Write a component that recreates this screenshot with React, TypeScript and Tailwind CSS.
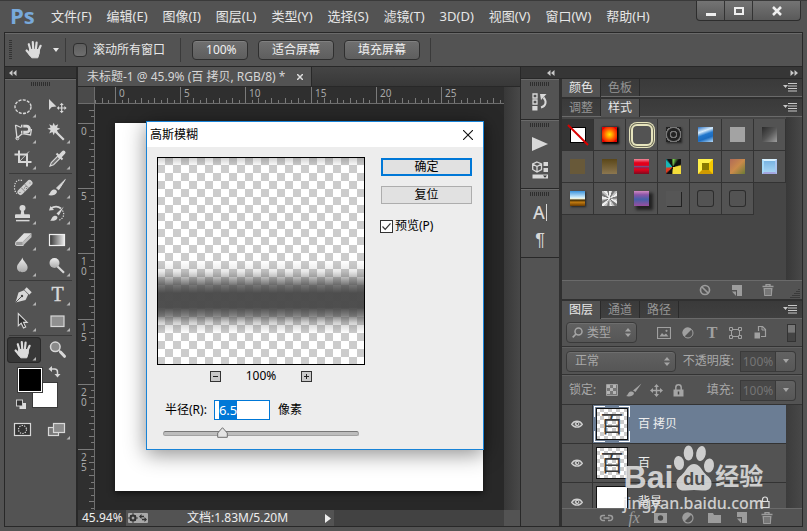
import { useEffect, useRef, useState } from 'react'
import type { ReactNode } from 'react'
import { clsx } from 'clsx'

const MENUS = ['文件(F)', '编辑(E)', '图像(I)', '图层(L)', '类型(Y)', '选择(S)', '滤镜(T)', '3D(D)', '视图(V)', '窗口(W)', '帮助(H)']

const UNIT = 13.04
const HALF_UNITS = Array.from({ length: 160 }, (_, i) => i - 4)
const LABELS = [0, 5, 10, 15, 20, 25]

function Grip() {
  return (
    <div className="mx-auto h-1 w-5 bg-[repeating-linear-gradient(90deg,#2e2e2e_0_1px,#535353_1px_2px)]" />
  )
}

function DoubleArrow({ flip }: { flip?: boolean }) {
  return (
    <svg width="8" height="6" viewBox="0 0 8 6" className={clsx(flip && 'rotate-180')} fill="#c8c8c8">
      <path d="M3.5 0v6L0 3zM7.5 0v6L4 3z" />
    </svg>
  )
}

function HandShape() {
  return (
    <>
      <path d="M11.5 12.5h9.800v3.500l-1.500 4.800h-6L10.800 17z" fill="#dcdcdc" stroke="#dcdcdc" strokeLinejoin="round" />
      <g stroke="#dcdcdc" strokeWidth="2.2" strokeLinecap="round" fill="none">
        <path d="M12.800 14 10.800 7.200" />
        <path d="M15.300 13 14.800 5.200" />
        <path d="M17.800 13 18.600 5.600" />
        <path d="M20.300 14 22.600 8.800" />
        <path d="M12.500 18 8.600 13.500" />
      </g>
    </>
  )
}

interface Tool {
  name: string
  art: ReactNode
  more?: boolean
  active?: boolean
}

const LIGHT = '#d8d8d8'

const SELECT_TOOLS: Tool[] = [
  {
    name: '椭圆选框',
    more: true,
    art: <ellipse cx="16" cy="12.7" rx="8" ry="6.8" fill="none" stroke={LIGHT} strokeWidth="1.4" strokeDasharray="3 1.3" />,
  },
  {
    name: '移动',
    art: (
      <>
        <path d="M8 5v11l2.800-3 4.700-.6z" fill={LIGHT} />
        <path d="M20.700 10.500v7M17 14h7.500" stroke={LIGHT} strokeWidth="1.2" />
        <path d="m20.700 8.800 2 2.200h-4zM20.700 19.200l-2-2.200h4zM15.800 14l2.200-2v4zM25.600 14l-2.200-2v4z" fill={LIGHT} />
      </>
    ),
  },
  {
    name: '磁性套索',
    more: true,
    art: (
      <>
        <path d="M8.500 5 14 7.500M8.500 5l1.500 13 5.500-4.500 8 1.500 1-6" fill="none" stroke={LIGHT} strokeWidth="1.300" />
        <circle cx="10.400" cy="18.300" r="1.500" fill="none" stroke={LIGHT} />
        <path d="M14 6.200h5.500a3 3 0 0 1 0 6H14" fill="none" stroke={LIGHT} strokeWidth="2.800" />
        <path d="M15.800 4.500v3.500M15.800 10.500V14" stroke="#535353" strokeWidth=".8" />
      </>
    ),
  },
  {
    name: '魔棒',
    more: true,
    art: (
      <>
        <path d="m12.700 2.800 1.300 3 3.200-1.600-1.200 3.300 3.200 1.300-3.200 1.400 1.200 3.200-3.200-1.400-1.300 3.200-1.300-3.200-3.200 1.400L9.600 10 6.400 8.800 9.600 7.500 8.200 4.200l3.200 1.600z" fill={LIGHT} />
        <path d="m14.500 11.500 8.300 8.300" stroke={LIGHT} strokeWidth="2.200" />
      </>
    ),
  },
  {
    name: '裁剪',
    more: true,
    art: (
      <>
        <path d="M12 4.500V16h12.500M7.500 8.500H20V20.500" fill="none" stroke={LIGHT} strokeWidth="2" />
        <path d="m12.500 15.500 9.500-10" stroke={LIGHT} strokeWidth=".9" />
      </>
    ),
  },
  {
    name: '吸管',
    more: true,
    art: (
      <>
        <path d="m9 20 1.300-3.500 7-7 2.300 2.200-7 7z" fill="#707070" stroke={LIGHT} strokeWidth="1.100" />
        <path d="m15.500 7.500 6 6" stroke={LIGHT} strokeWidth="2" />
        <path d="m18.800 10.500 3.700-4" stroke={LIGHT} strokeWidth="4" strokeLinecap="round" />
      </>
    ),
  },
]

const PAINT_TOOLS: Tool[] = [
  {
    name: '修复画笔',
    more: true,
    art: (
      <>
        <path d="M15 5.500c-4-1.500-7.500 1-7.500 7 0 3 1 5 2.500 6" fill="none" stroke={LIGHT} strokeWidth="1.200" strokeDasharray="1.300 1.300" />
        <path d="m13.500 17 9-9" stroke="#cfcfcf" strokeWidth="6" strokeLinecap="round" />
        <path d="m14 12.500 4.500 4.500M17.500 9l4.500 4.500" stroke="#777" strokeWidth=".8" />
        <path d="M17.200 13h.9M19.200 13.500h.9M18.500 11.500h.9M12.500 17.500h.9M22.500 8h.9" stroke="#555" strokeWidth=".9" />
      </>
    ),
  },
  {
    name: '画笔',
    more: true,
    art: (
      <>
        <path d="m15.500 13 8.800-8.500-6.600 10.300z" fill={LIGHT} stroke={LIGHT} strokeLinejoin="round" />
        <path d="M7 20c2.200-.5 2-4.500 5.500-5.500 2.200-.5 4 1.200 3.300 3C14.800 20.200 10.500 21 7 20z" fill={LIGHT} />
      </>
    ),
  },
  {
    name: '仿制图章',
    more: true,
    art: (
      <>
        <circle cx="15.500" cy="7" r="3" fill={LIGHT} />
        <path d="M14.300 9h2.400l.6 4.200h4.700a1 1 0 0 1 1 1V17H8v-2.800a1 1 0 0 1 1-1h4.700z" fill={LIGHT} />
        <path d="M9 19.600h13.500" stroke={LIGHT} strokeWidth="1.500" />
      </>
    ),
  },
  {
    name: '历史记录画笔',
    more: true,
    art: (
      <>
        <path d="M9.500 7.500c4-2.500 8-2 10.500 0" fill="none" stroke={LIGHT} strokeWidth="1.800" />
        <path d="M8 9.500 13 9 9.500 5z" fill={LIGHT} />
        <path d="m15.500 12.500 7.300-7-5 9z" fill={LIGHT} />
        <path d="M9 19.500c1.800-.5 1.500-4 4.500-4.800 2-.4 3.500 1 2.800 2.500-1 2.300-4.300 3-7.300 2.300z" fill={LIGHT} />
        <path d="M21.500 9.500c2.500 4 1 8-4 10" fill="none" stroke={LIGHT} strokeWidth="1.200" strokeDasharray="1.300 1.300" />
      </>
    ),
  },
  {
    name: '橡皮擦',
    more: true,
    art: (
      <>
        <path d="m9 14.500 8-8.300h7.500l-8.300 8.300z" fill="#dedede" />
        <path d="M9 14.500h7.200v4H9.500q-1 0-1-1.500z" fill="#9a9a9a" stroke={LIGHT} strokeWidth=".9" />
        <path d="m16.200 14.500 8.300-8.300v4l-8.300 8.300z" fill="#bdbdbd" />
      </>
    ),
  },
  {
    name: '渐变',
    more: true,
    art: <rect x="8.500" y="7.500" width="15" height="11" fill="url(#toolFade)" stroke="#efefef" strokeWidth="1.200" />,
  },
  {
    name: '模糊',
    more: true,
    art: <path d="M15.300 4.500c1 4 5.300 6 5.300 10 0 3-2.300 4.700-5.300 4.700S10 17.500 10 14.500c0-4 4.300-6 5.300-10z" fill="url(#toolSilver)" />,
  },
  {
    name: '减淡',
    more: true,
    art: (
      <>
        <circle cx="13.500" cy="10" r="5" fill="url(#toolSilver)" />
        <path d="m16.500 13.500 6.500 6.300" stroke={LIGHT} strokeWidth="2.200" />
      </>
    ),
  },
]

const SHAPE_TOOLS: Tool[] = [
  {
    name: '钢笔',
    more: true,
    art: (
      <>
        <path d="m8.500 20.500 3-10 5.500-2.300 4.200 4.200-2.600 5.600z" fill={LIGHT} />
        <path d="m8.500 20.500 6.300-6.300" stroke="#444" strokeWidth=".9" />
        <circle cx="15" cy="14" r="1.200" fill="#444" />
        <path d="m18.500 6.500 5 5" stroke={LIGHT} strokeWidth="3.300" />
      </>
    ),
  },
  {
    name: '文字',
    more: true,
    art: (
      <text x="16.500" y="19" textAnchor="middle" fontFamily="Liberation Serif, serif" fontSize="20" stroke={LIGHT} strokeWidth=".4" fill={LIGHT}>
        T
      </text>
    ),
  },
  {
    name: '路径选择',
    more: true,
    art: <path d="M11.300 5.500v12.300l2.900-2.600 2.300 4.900 2.200-1-2.200-4.700h3.700z" fill="#2f2f2f" stroke={LIGHT} strokeWidth="1.100" />,
  },
  {
    name: '矩形',
    more: true,
    art: <rect x="10" y="8" width="13" height="10.500" fill="#909090" stroke={LIGHT} strokeWidth="1.200" />,
  },
]

const VIEW_TOOLS: Tool[] = [
  { name: '抓手', more: true, active: true, art: <HandShape /> },
  {
    name: '缩放',
    art: (
      <>
        <circle cx="14.300" cy="9.800" r="4.800" fill="#8a8a8a" stroke={LIGHT} strokeWidth="1.500" />
        <path d="m18 13.500 2 2" stroke={LIGHT} strokeWidth="1.500" />
        <path d="m19.500 15 4 4.300" stroke={LIGHT} strokeWidth="3" strokeLinecap="round" />
      </>
    ),
  },
]

const MODE_TOOLS: Tool[] = [
  {
    name: '快速蒙版',
    art: (
      <>
        <rect x="7.500" y="7.500" width="16" height="12" fill="#333" stroke={LIGHT} strokeWidth="1.200" />
        <circle cx="15.500" cy="13.500" r="4" fill="none" stroke={LIGHT} strokeWidth="1.200" strokeDasharray="1.300 1.200" />
      </>
    ),
  },
  {
    name: '屏幕模式',
    more: true,
    art: (
      <>
        <rect x="7.500" y="11.500" width="10" height="8" fill="#777" stroke={LIGHT} strokeWidth="1.200" />
        <rect x="12.500" y="7.500" width="11" height="9" fill="#8c8c8c" stroke={LIGHT} strokeWidth="1.200" />
      </>
    ),
  },
]

function ToolGroup({ tools }: { tools: Tool[] }) {
  return (
    <div className="grid grid-cols-2">
      {tools.map((tool) => (
        <button
          key={tool.name}
          aria-label={tool.name}
          className={clsx(
            'h-[26px]',
            tool.active && 'rounded bg-[#383838] shadow-[inset_0_0_0_1px_#2a2a2a]'
          )}
        >
          <svg viewBox="0 0 33 26" className="h-[26px] w-[33px]">
            {tool.art}
            {tool.more && <path d="M29 20v3.500h-3.500z" fill="#b5b5b5" />}
          </svg>
        </button>
      ))}
    </div>
  )
}

function ToolDivider() {
  return <div className="mx-0.5 my-px h-px bg-[#3a3a3a]" />
}

function ToolPanel() {
  return (
    <aside className="flex w-[73px] shrink-0 flex-col border-x border-[#282828] bg-[#535353]">
      <div className="flex h-3 items-center border-b border-[#282828] bg-[#363636] pl-1">
        <DoubleArrow />
      </div>
      <svg width="0" height="0" className="absolute">
        <defs>
          <linearGradient id="toolFade">
            <stop offset="0" stopColor="#333" />
            <stop offset="1" stopColor="#eee" />
          </linearGradient>
          <linearGradient id="toolSilver" x2="0" y2="1">
            <stop offset="0" stopColor="#eee" />
            <stop offset="1" stopColor="#aaa" />
          </linearGradient>
        </defs>
      </svg>
      <div className="border-t border-[#6a6a6a] px-0.5 pt-0.5">
        <Grip />
        <div className="pt-2">
          <ToolGroup tools={SELECT_TOOLS} />
          <ToolDivider />
          <ToolGroup tools={PAINT_TOOLS} />
          <ToolDivider />
          <ToolGroup tools={SHAPE_TOOLS} />
          <ToolDivider />
          <ToolGroup tools={VIEW_TOOLS} />
        </div>
        <svg viewBox="0 0 66 53" className="h-[53px] w-[66px]">
          <rect x="25.500" y="19.500" width="25" height="25" fill="#fff" stroke="#3a3a3a" />
          <rect x="10.500" y="4.500" width="25" height="25" fill="#fff" stroke="#3a3a3a" />
          <rect x="12" y="6" width="22" height="22" fill="#000" />
          <path d="M44.500 6h3q3 0 3 3v3" fill="none" stroke={LIGHT} strokeWidth="1.500" />
          <path d="m41.500 6 3.500-3v6zM50.500 14.500 47.500 11h6z" fill={LIGHT} />
          <rect x="12.500" y="40" width="6.500" height="6" fill="#ddd" />
          <rect x="9.500" y="37" width="6" height="6" fill="#333" stroke="#ccc" />
        </svg>
        <ToolGroup tools={MODE_TOOLS} />
      </div>
    </aside>
  )
}

function MenuBar() {
  return (
    <header className="flex h-8 shrink-0 items-center border-t border-[#3a3a3a] pr-1.5 pl-2.5 text-[13px]">
      <span className="w-[41px] self-start font-['Open_Sans',sans-serif] text-[22px] leading-7 font-bold text-[#78a9db]">Ps</span>
      <nav className="flex gap-[15px]">
        {MENUS.map((menu) => (
          <button key={menu} className="text-[#e6e6e6]">
            {menu}
          </button>
        ))}
      </nav>
      <div className="ml-auto flex h-5 self-start divide-x divide-[#333] overflow-hidden rounded-b border border-t-0 border-[#2d2d2d] bg-linear-to-b from-[#747474] to-[#5a5a5a]">
        <button aria-label="最小化" className="grid w-7 place-items-center">
          <svg width="12" height="12"><path d="M1 8h10v3H1z" fill="#eee" /></svg>
        </button>
        <button aria-label="最大化" className="grid w-7 place-items-center">
          <svg width="12" height="12"><path d="M2 3h8v6H2z" fill="none" stroke="#eee" strokeWidth="2" /></svg>
        </button>
        <button aria-label="关闭" className="grid w-[47px] place-items-center">
          <svg width="12" height="12"><path d="m2 2 8 8M10 2l-8 8" stroke="#eee" strokeWidth="2.500" /></svg>
        </button>
      </div>
    </header>
  )
}

const optionButton =
  'h-5 rounded-sm border border-[#2f2f2f] bg-linear-to-b from-[#707070] to-[#5e5e5e] px-[13px] text-[#f0f0f0] shadow-[inset_0_1px_0_#808080]'

function OptionsBar() {
  return (
    <div className="mx-1 flex h-[34px] shrink-0 items-center border border-b-0 border-[#282828] pl-1 shadow-[inset_0_1px_0_#6a6a6a]">
      <div className="h-5 w-[3px] bg-[repeating-linear-gradient(180deg,#333_0_1px,#535353_1px_2px)]" />
      <svg viewBox="0 0 33 26" className="ml-1.5 h-[26px] w-[33px]">
        <HandShape />
      </svg>
      <svg width="6" height="4" className="ml-0.5"><path d="M0 0h6L3 4z" fill="#e6e6e6" /></svg>
      <div className="ml-1.5 h-6 w-px bg-[#3a3a3a]" />
      <label className="ml-[7px] flex items-center gap-1.5 text-[#e8e8e8]">
        <input
          type="checkbox"
          className="size-3.5 appearance-none rounded-sm border border-[#2f2f2f] bg-linear-to-b from-[#5e5e5e] to-[#6e6e6e]"
        />
        滚动所有窗口
      </label>
      <div className="mr-[11px] ml-[15px] h-6 w-px bg-[#3a3a3a]" />
      <div className="flex gap-2.5">
        <button className={clsx(optionButton, 'w-14')}>100%</button>
        <button className={optionButton}>适合屏幕</button>
        <button className={optionButton}>填充屏幕</button>
      </div>
      <div className="ml-2.5 h-6 w-px bg-[#3a3a3a]" />
    </div>
  )
}

function HorizontalRuler() {
  return (
    <svg className="h-full w-full" fontFamily="Noto Sans, sans-serif" fontSize="10" fill="#a8a8a8">
      {HALF_UNITS.map((i) => {
        const x = Math.round(20 + (i * UNIT) / 2) + 0.5
        return <path key={i} d={`M${x} ${i % 10 === 0 ? 0 : i % 2 === 0 ? 11 : 13}V16`} stroke="#7a7a7a" />
      })}
      {LABELS.map((n) => (
        <text key={n} x={Math.round(24 + n * UNIT)} y="10">{n}</text>
      ))}
    </svg>
  )
}

function VerticalRuler() {
  return (
    <svg className="h-full w-full" fontFamily="Noto Sans, sans-serif" fontSize="10" fill="#a8a8a8">
      {HALF_UNITS.map((i) => {
        const y = Math.round(19 + (i * UNIT) / 2) + 0.5
        return <path key={i} d={`M${i % 10 === 0 ? 0 : i % 2 === 0 ? 11 : 13} ${y}H16`} stroke="#7a7a7a" />
      })}
      {LABELS.map((n) =>
        String(n).split('').map((digit, k) => (
          <text key={`${n}-${k}`} x="3" y={Math.round(31 + n * UNIT) + k * 10}>{digit}</text>
        ))
      )}
    </svg>
  )
}

function BlurPreview() {
  return (
    <svg viewBox="0 0 206 206" className="block size-[206px]">
      <defs>
        <pattern id="checker" x="-1" y="-1" width="16" height="16" patternUnits="userSpaceOnUse">
          <rect width="16" height="16" fill="#fff" />
          <path d="M8 0h8v8H8zM0 8h8v8H0z" fill="#ccc" />
        </pattern>
        <linearGradient id="blurBand" x2="0" y2="1">
          <stop offset="0" stopColor="#4b4b4b" stopOpacity="0.250" />
          <stop offset="0.040" stopColor="#4b4b4b" stopOpacity="0" />
          <stop offset="0.500" stopColor="#4b4b4b" stopOpacity="0" />
          <stop offset="0.550" stopColor="#4b4b4b" stopOpacity="0.120" />
          <stop offset="0.580" stopColor="#4b4b4b" stopOpacity="0.380" />
          <stop offset="0.615" stopColor="#4b4b4b" stopOpacity="0.750" />
          <stop offset="0.655" stopColor="#4b4b4b" stopOpacity="0.980" />
          <stop offset="0.725" stopColor="#4b4b4b" stopOpacity="0.980" />
          <stop offset="0.765" stopColor="#4b4b4b" stopOpacity="0.700" />
          <stop offset="0.800" stopColor="#4b4b4b" stopOpacity="0.250" />
          <stop offset="0.850" stopColor="#4b4b4b" stopOpacity="0" />
        </linearGradient>
      </defs>
      <rect width="206" height="206" fill="url(#checker)" />
      <rect width="206" height="206" fill="url(#blurBand)" />
    </svg>
  )
}

function ZoomButton({ label, d }: { label: string; d: string }) {
  return (
    <button aria-label={label} className="grid size-[11px] place-items-center border border-[#333] bg-[#c9c9c9]">
      <svg width="7" height="7"><path d={d} stroke="#222" /></svg>
    </button>
  )
}

function BlurDialog() {
  const radiusRef = useRef<HTMLInputElement>(null)
  const [radius, setRadius] = useState('6.5')
  const [slider, setSlider] = useState(29)
  const [preview, setPreview] = useState(true)

  useEffect(() => {
    radiusRef.current?.focus()
    radiusRef.current?.select()
  }, [])

  return (
    <section
      role="dialog"
      aria-label="高斯模糊"
      className="absolute top-[17px] left-[51px] border border-[#1883d7] bg-[#ededed] text-black shadow-[0_4px_20px_rgba(0,0,0,0.450)]"
    >
      <div className="flex h-[25px] items-center justify-between bg-white pr-2.5 pl-[3px]">
        <h1>高斯模糊</h1>
        <button aria-label="关闭">
          <svg width="10" height="10"><path d="m0 0 10 10M10 0 0 10" stroke="#111" strokeWidth="1.100" /></svg>
        </button>
      </div>
      <div className="flex gap-4 pt-2.5 pr-[11px] pb-2.5 pl-2.5">
        <div>
          <div className="border border-black">
            <BlurPreview />
          </div>
          <div className="mt-[3px] flex h-4 items-center justify-center gap-[25px]">
            <ZoomButton label="缩小" d="M1 3.500h5" />
            <span>100%</span>
            <ZoomButton label="放大" d="M1 3.500h5M3.500 1v5" />
          </div>
          <div className="mt-4 flex h-5 items-center pl-2">
            <label htmlFor="radius">半径(R):</label>
            <input
              id="radius"
              ref={radiusRef}
              value={radius}
              onChange={(e) => setRadius(e.target.value)}
              className="mr-2 ml-[7px] h-5 w-14 border border-[#0078d7] bg-white pl-1 text-[13px] outline-none selection:bg-[#0078d7] selection:text-white"
            />
            像素
          </div>
          <div className="relative mt-[7px] ml-1.5 h-3 w-[196px]">
            <input
              type="range"
              aria-label="半径"
              value={slider}
              onChange={(e) => setSlider(Number(e.target.value))}
              className="block h-3 w-full appearance-none bg-transparent [&::-webkit-slider-runnable-track]:h-[5px] [&::-webkit-slider-runnable-track]:rounded-full [&::-webkit-slider-runnable-track]:border [&::-webkit-slider-runnable-track]:border-[#a2a2a2] [&::-webkit-slider-runnable-track]:border-t-[#777] [&::-webkit-slider-runnable-track]:bg-[#bdbdbd] [&::-webkit-slider-thumb]:size-[11px] [&::-webkit-slider-thumb]:appearance-none [&::-webkit-slider-thumb]:opacity-0"
            />
            <svg
              width="11"
              height="11"
              className="pointer-events-none absolute top-0"
              style={{ left: Math.round((slider / 100) * 185) }}
            >
              <path d="M5.500.7 10.300 6v4.300H.7V6z" fill="#e4e4e4" stroke="#6e6e6e" />
            </svg>
          </div>
        </div>
        <div className="flex w-[91px] flex-col">
          <button className="mt-px h-[18px] border-2 border-[#0078d7] bg-[#e1e1e1] leading-[14px]">确定</button>
          <button className="mt-2.5 h-[18px] border border-[#adadad] bg-[#e1e1e1] leading-4">复位</button>
          <label className="mt-3.5 -ml-px flex items-center gap-0.5">
            <span className="grid size-[13px]">
              <input
                type="checkbox"
                checked={preview}
                onChange={(e) => setPreview(e.target.checked)}
                className="col-start-1 row-start-1 size-[13px] appearance-none border border-[#333] bg-white"
              />
              {preview && (
                <svg viewBox="0 0 13 13" className="pointer-events-none col-start-1 row-start-1 size-[13px]">
                  <path d="m2.500 6.500 2.700 2.800 5.300-6" fill="none" stroke="#333" strokeWidth="1.200" />
                </svg>
              )}
            </span>
            预览(P)
          </label>
        </div>
      </div>
    </section>
  )
}

function DocumentArea() {
  return (
    <main className="flex min-w-0 flex-1 flex-col border-l border-[#282828] bg-[#535353]">
      <div className="flex h-5 shrink-0 border-b border-[#282828] bg-linear-to-b from-[#454545] to-[#383838]">
        <div className="flex items-center gap-3 border-r border-[#282828] bg-[#535353] pr-2 pl-[9px] whitespace-nowrap text-[#d6d6d6]">
          未标题-1 @ 45.9% (百 拷贝, RGB/8) *
          <button aria-label="关闭文档">
            <svg width="6" height="6"><path d="m0 0 6 6M6 0 0 6" stroke="#ddd" strokeWidth="1.500" /></svg>
          </button>
        </div>
      </div>
      <div className="flex min-h-0 flex-1">
        <div className="grid min-w-0 flex-1 grid-cols-[17px_1fr] grid-rows-[17px_1fr] overflow-hidden">
          <div className="border-r border-b border-[#6d6d6d] bg-[#4a4a4a]" />
          <div className="overflow-hidden border-b border-[#6d6d6d] bg-[#2f2f2f]">
            <HorizontalRuler />
          </div>
          <div className="overflow-hidden border-r border-[#6d6d6d] bg-[#2f2f2f]">
            <VerticalRuler />
          </div>
          <div className="relative overflow-hidden bg-[#282828] pt-[19px] pl-5">
            <div className="size-[368px] bg-white shadow-[0_2px_6px_#111]" />
            <BlurDialog />
          </div>
        </div>
        <div className="w-4 bg-linear-to-r from-[#383838] to-[#484848]" />
      </div>
      <footer className="flex h-4 shrink-0 bg-[#424242] text-[#eee]">
        <span className="w-12 bg-[#3a3a3a] pl-1 leading-4">45.94%</span>
        <div className="flex w-[208px] items-center bg-[#535353]">
          <svg width="20" height="10" className="ml-0.5">
            <rect width="20" height="10" rx="1" fill="#a9a9a9" />
            <circle cx="5" cy="5" r="2.500" fill="none" stroke="#333" strokeWidth="2" />
            <path d="M5 0v10M0 5h10M2 2l6 6M8 2 2 8" stroke="#333" strokeWidth=".9" />
            <circle cx="5" cy="5" r="1.200" fill="#a9a9a9" />
            <path d="M12 3.500h4M14 6.500h4" stroke="#333" strokeWidth="1.300" />
            <path d="M13.500 1v5L11 3.500zM16.500 4v5L19 6.500z" fill="#333" />
          </svg>
          <span className="ml-[39px] leading-4">文档:1.83M/5.20M</span>
          <svg width="6" height="9" className="mr-[3px] ml-auto"><path d="M0 0v9l6-4.500z" fill="#eee" /></svg>
        </div>
        <div className="ml-auto w-4 bg-[#535353]" />
      </footer>
    </main>
  )
}

function IconStrip() {
  return (
    <aside className="flex w-[38px] shrink-0 flex-col bg-[#535353]">
      <div className="flex h-[41px] flex-col border-t border-b border-t-[#6a6a6a] border-b-[#282828] pt-0.5">
        <Grip />
        <button aria-label="历史记录" className="mx-auto mt-1.5">
          <svg width="16" height="19" viewBox="0 0 16 19">
            <path d="M1 2h4v4H1zM1 8h4v4H1z" fill="none" stroke={LIGHT} strokeWidth="1.300" />
            <path d="M.3 14h5.200v4.500H.3z" fill={LIGHT} />
            <path d="M9 15.500c5-1.500 6-6 2.500-10" fill="none" stroke={LIGHT} strokeWidth="2" />
            <path d="M8 2h6.500L9 8z" fill={LIGHT} />
          </svg>
        </button>
      </div>
      <div className="flex h-[69px] flex-col items-center border-t border-b border-t-[#6a6a6a] border-b-[#282828] pt-0.5">
        <Grip />
        <button aria-label="动作" className="mt-2.5">
          <svg width="16" height="14"><path d="M0 0v14l16-7z" fill={LIGHT} /></svg>
        </button>
        <button aria-label="3D" className="mt-2.5">
          <svg width="16" height="18" viewBox="0 0 16 18">
            <path d="m5 1 4.500 2v5.500L5 11 .7 8.500V3zM.7 3 5 5.500 9.500 3M5 5.500V11" fill="none" stroke={LIGHT} strokeWidth="1.300" />
            <path d="M11.500 1H16v4h-4.500zM11.500 7H16v4h-4.500zM.5 13.500H16V17.500H.5z" fill={LIGHT} />
            <path d="M11 14.500h4l-2 2.200z" fill="#333" />
          </svg>
        </button>
      </div>
      <div className="flex h-[69px] flex-col items-center border-t border-b border-t-[#6a6a6a] border-b-[#282828] pt-0.5 text-[#d8d8d8]">
        <Grip />
        <button aria-label="字符" className="mt-1.5 flex items-center gap-px font-['Noto_Sans',sans-serif] text-lg leading-5 font-medium">
          A
          <span className="h-[17px] w-px bg-[#d8d8d8]" />
        </button>
        <button aria-label="段落" className="mt-2 font-['Liberation_Sans',sans-serif] text-lg leading-5 font-medium">
          ¶
        </button>
      </div>
    </aside>
  )
}

function PanelTabs({ tabs, active }: { tabs: string[]; active: string }) {
  return (
    <div className="flex h-[18px] shrink-0 items-stretch border-b border-[#6a6a6a] bg-linear-to-b from-[#3a3a3a] to-[#404040]">
      {tabs.map((tab) => (
        <button
          key={tab}
          className={clsx(
            'border-r border-[#2a2a2a] px-[7px]',
            tab === active ? '-mb-px bg-[#535353] text-[#e8e8e8]' : 'text-[#959595]'
          )}
        >
          {tab}
        </button>
      ))}
      <button aria-label="面板菜单" className="mr-[5px] ml-auto">
        <svg width="14" height="9"><path d="M0 2h5L2.500 5z" fill="#c8c8c8" /><path d="M5 .5h9M5 3h9M5 5.500h9M5 8h9" stroke="#c8c8c8" /></svg>
      </button>
    </div>
  )
}

const STYLES = [
  '',
  'bg-radial from-[#ffe600] via-[#ff5a00] to-[#e60000] to-80% shadow-[1px_1px_2px_1px_#000]',
  'rounded-sm border-0 bg-[#535353] shadow-[0_0_0_2px_#e6e4bd,0_0_0_3px_#6c6b58,0_0_0_4px_#e6e4bd]',
  'bg-[repeating-radial-gradient(circle,#222_0_2px,#777_3px_4px)] shadow-[1px_1px_2px_#222]',
  'bg-[linear-gradient(160deg,#2a6fc0,#d8ecfb_30%,#2277cc_50%,#1b6cc0_70%,#b7dcfa)]',
  'bg-[#a3a3a3]',
  'bg-linear-to-br from-[#2b2b2b] via-[#555] to-[#a0a0a0]',
  'bg-[#685939]',
  'bg-linear-to-b from-[#5b4718] to-[#8c7750]',
  'bg-[linear-gradient(#f28a9b,#e3001b_25%,#e3001b_42%,#7c4a80_50%,#a31a44_58%,#e3001b_70%,#7d0a20)]',
  'bg-[conic-gradient(from_40deg_at_45%_55%,#111_0_8%,#f3dc3a_12%_38%,#111_42%_50%,#e03a20_54%_60%,#17b7b7_66%_76%,#111_80%_86%,#7ad04f_90%,#111)]',
  'border-4 border-t-[#fff04a] border-r-[#f5c800] border-b-[#d09a00] border-l-[#fff04a] bg-[#8a7b00]',
  'bg-linear-to-br from-[#b06a55] via-[#c98a4b] to-[#6b7a35]',
  'border-2 border-t-[#d8f1ff] border-r-[#a8c4ee] border-b-[#a3a6e0] border-l-[#a4d9f8] bg-linear-to-b from-[#79b4e2] to-[#a5d4f2]',
  'bg-[linear-gradient(#3a93dc,#d8f1fb_45%,#f4f0d0_52%,#3c2a05_60%,#c07a10_75%,#6a3b00)] shadow-[1px_1px_2px_#222]',
  'bg-[repeating-conic-gradient(#eee_0_4%,#777_6%_9%,#c4c4c4_12%_15%)]',
  'bg-[linear-gradient(#d08ac0,#8a55a8_25%,#4560a8_55%,#9a4ea0)] shadow-[3px_3px_3px_1px_#222]',
  'bg-[#565656] shadow-[1px_1px_0_#222]',
  'rounded-xs shadow-[0_0_0_1px_#2c2c2c]',
  'rounded-xs shadow-[0_0_0_1px_#2c2c2c]',
]

function TrashIcon() {
  return (
    <svg width="12" height="12" viewBox="0 0 12 12">
      <path d="M.5 2.500h11M4 2V.7h4V2" fill="none" stroke="#9c9c9c" strokeWidth="1.300" />
      <path d="M1.500 4h9l-.7 8H2.200z" fill="#9c9c9c" />
      <path d="M4 5v6M6 5v6M8 5v6" stroke="#535353" />
    </svg>
  )
}

function NewIcon() {
  return (
    <svg width="11" height="11"><path d="M1 0h10v11H6V5H1z" fill="#9c9c9c" /><path d="M1 6.500h4V11z" fill="#9c9c9c" /></svg>
  )
}

function StylesPanel() {
  return (
    <section className="flex shrink-0 flex-col">
      <PanelTabs tabs={['调整', '样式']} active="样式" />
      <div className="flex h-[163px] bg-[#464646]">
        <div className="grid flex-1 grid-cols-7 content-start pt-0.5">
          {STYLES.map((style, i) => (
            <button
              key={i}
              aria-label={`样式 ${i + 1}`}
              className={clsx(
                'grid h-8 place-items-center border-r border-b border-[#333]',
                i === 0 ? 'bg-[#353535]' : 'bg-[#535353]'
              )}
            >
              {i === 0 ? (
                <svg width="22" height="22">
                  <rect x="3.500" y="3.500" width="15" height="15" fill="#fff" stroke="#000" />
                  <path d="m1 1 20 20" stroke="#d80000" strokeWidth="2" />
                </svg>
              ) : (
                <span className={clsx(i === 2 ? 'size-[18px]' : 'size-[15px]', style)} />
              )}
            </button>
          ))}
        </div>
        <div className="w-4 bg-linear-to-r from-[#383838] to-[#484848]" />
      </div>
      <div className="flex h-[19px] items-center gap-5 border-t border-[#6a6a6a]">
        <button aria-label="清除样式" className="ml-auto">
          <svg width="12" height="12"><circle cx="6" cy="6" r="4.500" fill="none" stroke="#9c9c9c" strokeWidth="1.700" /><path d="m3 3 6 6" stroke="#9c9c9c" strokeWidth="1.700" /></svg>
        </button>
        <button aria-label="新建样式"><NewIcon /></button>
        <button aria-label="删除样式"><TrashIcon /></button>
        <svg width="10" height="10" className="mr-0.5 -ml-1 self-end">
          <path d="M9 0v10M7 2v8M5 4v6M3 6v4M1 8v2" stroke="#222" strokeDasharray="1 1" />
        </svg>
      </div>
    </section>
  )
}

function UpDown() {
  return (
    <svg width="6" height="9" className="pointer-events-none col-start-1 row-start-1 mr-1.5 justify-self-end">
      <path d="M0 3.500h6L3 0zM0 5.500h6L3 9z" fill="#a5a5a5" />
    </svg>
  )
}

const selectBox =
  'col-start-1 row-start-1 h-[21px] w-full appearance-none rounded-sm border border-[#3a3a3a] bg-linear-to-b from-[#616161] to-[#565656] text-[#a8a8a8] shadow-[inset_0_1px_0_#6e6e6e]'

function PercentField({ id, label }: { id: string; label: string }) {
  return (
    <div className="ml-auto flex items-center">
      <label htmlFor={id} className="mr-1.5">{label}:</label>
      <input
        id={id}
        defaultValue="100%"
        className="h-[21px] w-9 border border-[#3a3a3a] bg-[#484848] text-center text-[#757575]"
      />
      <button aria-label={`${label}滑块`} className="grid h-[21px] w-5 place-items-center rounded-r-sm border border-l-0 border-[#3a3a3a] bg-linear-to-b from-[#626262] to-[#575757]">
        <svg width="6" height="4"><path d="M0 0h6L3 4z" fill="#a5a5a5" /></svg>
      </button>
    </div>
  )
}

function Eye() {
  return (
    <svg width="12" height="10" viewBox="0 0 12 10">
      <path d="M.7 5.300C3 1.200 9 1.200 11.300 5.300 9 9 3 9 .7 5.300z" fill="#666" stroke="#d0d0d0" strokeWidth="1.300" />
      <circle cx="6" cy="5" r="2" fill="#ddd" />
      <circle cx="6.300" cy="4.800" r=".9" fill="#333" />
    </svg>
  )
}

interface Layer {
  name: string
  selected?: boolean
  locked?: boolean
}

const LAYERS: Layer[] = [{ name: '百 拷贝', selected: true }, { name: '百' }, { name: '背景', locked: true }]

function LayerThumb({ layer }: { layer: Layer }) {
  return (
    <svg viewBox="0 0 36 36" className="size-9 shrink-0">
      <defs>
        <pattern id="thumbChecker" x="2" y="2" width="8" height="8" patternUnits="userSpaceOnUse">
          <rect width="8" height="8" fill="#fff" />
          <path d="M4 0h4v4H4zM0 4h4v4H0z" fill="#ccc" />
        </pattern>
      </defs>
      <rect x="2.500" y="2.500" width="31" height="31" fill={layer.locked ? '#fff' : 'url(#thumbChecker)'} stroke="#111" />
      {!layer.locked && (
        <text x="18" y="26" textAnchor="middle" fontFamily="Noto Sans CJK SC, sans-serif" fontSize="23" fill="#3c3c3c">
          百
        </text>
      )}
      {layer.selected && (
        <path d="M.5 11V.5H11M25 .5h10.500V11M35.500 25v10.500H25M11 35.500H.5V25" fill="none" stroke="#fff" strokeWidth="1.200" />
      )}
    </svg>
  )
}

function LayersPanel() {
  return (
    <section className="flex min-h-0 flex-1 flex-col text-[#a8a8a8]">
      <PanelTabs tabs={['图层', '通道', '路径']} active="图层" />
      <div className="flex h-7 shrink-0 items-center border-b border-[#333] pr-1.5 pl-1">
        <div className="grid w-[71px] items-center">
          <select aria-label="过滤类型" className={clsx(selectBox, 'pl-5')}>
            <option>类型</option>
          </select>
          <svg width="11" height="11" className="pointer-events-none col-start-1 row-start-1 ml-1.5">
            <circle cx="6.500" cy="4.500" r="3.500" fill="none" stroke="#a5a5a5" strokeWidth="1.500" />
            <path d="M4 7 .7 10.300" stroke="#a5a5a5" strokeWidth="1.700" />
          </svg>
          <UpDown />
        </div>
        <div className="ml-5 flex items-center gap-2.5">
          <button aria-label="像素图层">
            <svg width="14" height="12"><path d="M.5.500h13v11H.5z" fill="none" stroke="#a0a0a0" strokeWidth="1.200" /><path d="M2.500 9.500 5 6l2 2 2-1.500 2.500 3z" fill="#a0a0a0" /><circle cx="9.500" cy="3.800" r="1.100" fill="#a0a0a0" /></svg>
          </button>
          <button aria-label="调整图层">
            <svg width="14" height="12"><circle cx="7" cy="6" r="5" fill="none" stroke="#a0a0a0" /><path d="M10.500 2.500A5 5 0 1 0 3.500 9.500z" fill="#a0a0a0" /></svg>
          </button>
          <button aria-label="文字图层" className="w-3.5 font-['Liberation_Serif',serif] text-base leading-4 font-bold text-[#a0a0a0]">T</button>
          <button aria-label="形状图层">
            <svg width="14" height="12"><path d="M2.500 2.500h8v7h-8z" fill="none" stroke="#a0a0a0" /><path d="M.5.500h3v3h-3zM9.500.500h3v3h-3zM.5 8.500h3v3h-3zM9.500 8.500h3v3h-3z" fill="#535353" stroke="#a0a0a0" /></svg>
          </button>
          <button aria-label="智能对象">
            <svg width="14" height="13"><path d="M5.500 5V.500h4l3 3v7H8" fill="none" stroke="#a0a0a0" strokeWidth="1.200" /><path d="M9 .500V4h3.500" fill="none" stroke="#a0a0a0" /><path d="M1.500 6.500h5.500v6H1.500z" fill="#a0a0a0" /></svg>
          </button>
        </div>
        <button aria-label="过滤开关" className="ml-auto h-[18px] w-[9px] border border-[#333] bg-linear-to-b from-[#777] from-45% to-[#444] to-50%" />
      </div>
      <div className="flex h-7 shrink-0 items-center border-t border-b border-t-[#606060] border-b-[#333] pr-1.5 pl-1">
        <div className="grid w-[110px] items-center">
          <select aria-label="混合模式" className={clsx(selectBox, 'pl-2')}>
            <option>正常</option>
          </select>
          <UpDown />
        </div>
        <PercentField id="opacity" label="不透明度" />
      </div>
      <div className="flex h-[30px] shrink-0 items-center border-t border-b border-t-[#606060] border-b-[#333] pr-1.5 pl-[7px]">
        <span>锁定:</span>
        <div className="ml-2.5 flex items-center gap-2">
          <button aria-label="锁定透明像素">
            <svg width="12" height="12"><path d="M.5.500h11v11H.5z" fill="#777" stroke="#a0a0a0" /><path d="M1 1h3v3H1zM7 1h3v3H7zM4 4h3v3H4zM1 7h3v3H1zM7 7h3v3H7z" fill="#b5b5b5" /></svg>
          </button>
          <button aria-label="锁定图像像素">
            <svg width="16" height="14"><path d="m7 7.500 8.500-7L9.500 9zM0 13c2-.5 2-4 4.800-4.500 2-.3 3.700 1 3 2.500C7 13.300 3 14 0 13z" fill="#a5a5a5" /></svg>
          </button>
          <button aria-label="锁定位置">
            <svg width="13" height="13"><path d="M6.500 2v9M2 6.500h9" stroke="#a5a5a5" strokeWidth="1.400" /><path d="m6.500 0 2.500 3H4zM6.500 13 4 10h5zM0 6.500 3 4v5zM13 6.500 10 4v5z" fill="#a5a5a5" /></svg>
          </button>
          <button aria-label="锁定全部" className="ml-0.5">
            <svg width="11" height="13"><path d="M2.800 6V3.500a2.700 2.700 0 0 1 5.400 0V6" fill="none" stroke="#a5a5a5" strokeWidth="1.500" /><path d="M.5 5.500h10V12.500H.5z" fill="#a5a5a5" /><path d="M5.500 7.500v3" stroke="#444" strokeWidth="1.500" /></svg>
          </button>
        </div>
        <PercentField id="fill" label="填充" />
      </div>
      <div className="flex min-h-0 flex-1">
        <ul className="flex-1 overflow-hidden">
          {LAYERS.map((layer) => (
            <li key={layer.name} className="flex h-[39px] border-b border-[#333]">
              <button aria-label="可见性" className="grid w-[31px] place-items-center border-r border-[#333]">
                <Eye />
              </button>
              <div className={clsx('flex flex-1 items-center gap-2 pl-px text-[#eee]', layer.selected && 'bg-[#6b7d94]')}>
                <LayerThumb layer={layer} />
                {layer.name}
                {layer.locked && (
                  <svg width="10" height="12" className="mr-4 ml-auto"><path d="M2.500 6V3.500a2.500 2.500 0 0 1 5 0V6M1 5.500h8v6H1z" fill="none" stroke="#ddd" strokeWidth="1.200" /></svg>
                )}
              </div>
            </li>
          ))}
        </ul>
        <div className="w-4 bg-linear-to-r from-[#3c3c3c] to-[#484848]" />
      </div>
      <div className="flex h-[18px] shrink-0 items-center justify-between border-t border-[#6a6a6a] pr-[29px] pl-[37px]">
        <button aria-label="链接图层">
          <svg width="15" height="8"><path d="M6 1.500H4a2.500 2.500 0 0 0 0 5h2M9 1.500h2a2.500 2.500 0 0 1 0 5H9M4.500 4h6" fill="none" stroke="#9c9c9c" strokeWidth="1.600" /></svg>
        </button>
        <button aria-label="图层样式" className="font-['Liberation_Serif',serif] text-base leading-4 text-[#9c9c9c] italic">fx</button>
        <button aria-label="图层蒙版">
          <svg width="13" height="10"><path d="M0 0h13v10H0z" fill="#9c9c9c" /><circle cx="6.500" cy="5" r="2.700" fill="#4a4a4a" /></svg>
        </button>
        <button aria-label="新建调整图层">
          <svg width="12" height="12"><circle cx="6" cy="6" r="5" fill="none" stroke="#9c9c9c" strokeWidth="1.200" /><path d="M9.500 2.500A5 5 0 1 0 2.500 9.500z" fill="#9c9c9c" /></svg>
        </button>
        <button aria-label="新建组">
          <svg width="13" height="10"><path d="M0 0h5l1 2h7v8H0z" fill="#9c9c9c" /></svg>
        </button>
        <button aria-label="新建图层"><NewIcon /></button>
        <button aria-label="删除图层"><TrashIcon /></button>
      </div>
    </section>
  )
}

function Watermark() {
  return (
    <div className="pointer-events-none absolute right-[43px] bottom-4 flex flex-col items-center text-[#e4e4e4] opacity-85">
      <div className="flex items-end font-['Liberation_Sans','Noto_Sans_CJK_SC',sans-serif] font-bold">
        <span className="text-[32px] leading-7">Bai</span>
        <div className="grid">
          <svg viewBox="0 0 42 46" className="col-start-1 row-start-1 h-[46px] w-[42px]" fill="#e4e4e4">
            <ellipse cx="6" cy="18" rx="5" ry="7" transform="rotate(-8 6 18)" />
            <ellipse cx="15.500" cy="8" rx="4.800" ry="7.500" />
            <ellipse cx="28" cy="8.500" rx="4.800" ry="7.500" transform="rotate(10 28 8.500)" />
            <ellipse cx="36" cy="20.500" rx="5" ry="7" transform="rotate(8 36 20.500)" />
            <path d="M21 19c5 0 7 4.500 10 8.500 3 3.800 8 6 7.500 11.500-.6 6-5 7-9 6.500-6-.8-11-.8-17 0-4 .5-8.500-.5-9-6.500-.5-5.500 4.500-7.700 7.500-11.500 3-4 5-8.500 10-8.500z" />
          </svg>
          <span className="col-start-1 row-start-1 self-end text-center text-lg leading-6 text-[#4c4c4c]">du</span>
        </div>
        <span className="text-2xl leading-7">经验</span>
      </div>
      <span className="font-['Noto_Sans',sans-serif] text-base leading-6 font-medium">jingyan.baidu.com</span>
    </div>
  )
}

export default function App() {
  return (
    <div className="relative flex h-screen flex-col overflow-hidden bg-[#535353] font-['Noto_Sans','Noto_Sans_CJK_SC',sans-serif] text-xs">
      <MenuBar />
      <OptionsBar />
      <div className="mx-1 mb-1 flex min-h-0 flex-1 border-t border-b border-[#282828]">
        <ToolPanel />
        <DocumentArea />
        <div className="flex w-[283px] shrink-0 flex-col border-r border-l border-[#282828]">
          <div className="flex h-3 shrink-0 items-center justify-between border-b border-[#282828] bg-[#363636] pr-1 pl-[26px]">
            <DoubleArrow />
            <DoubleArrow flip />
          </div>
          <div className="flex min-h-0 flex-1 gap-[3px] bg-[#303030]">
            <IconStrip />
            <div className="flex min-w-0 flex-1 flex-col gap-0.5">
              <div className="shrink-0 bg-[#535353]">
                <PanelTabs tabs={['颜色', '色板']} active="颜色" />
              </div>
              <div className="bg-[#535353]">
                <StylesPanel />
              </div>
              <div className="flex min-h-0 flex-1 flex-col bg-[#535353]">
                <LayersPanel />
              </div>
            </div>
          </div>
        </div>
      </div>
      <Watermark />
    </div>
  )
}
